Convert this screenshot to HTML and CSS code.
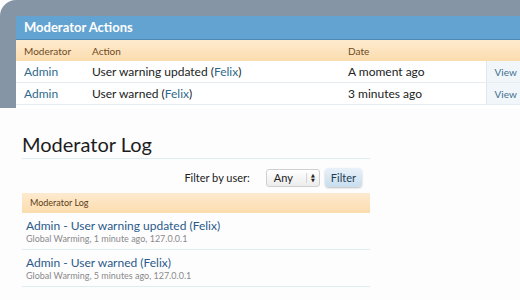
FILE: index.html
```html
<!DOCTYPE html>
<html lang="en">
<head>
  <meta charset="UTF-8">
  <title>Moderator Log</title>
  <link rel="stylesheet" href="styles.css">
</head>
<body>

  <!-- Overlay: moderator actions -->
  <div class="overlay">
    <div class="panel">
      <div class="panel-title">Moderator Actions</div>
      <table class="actions">
        <thead>
          <tr>
            <th class="col-mod">Moderator</th>
            <th class="col-action">Action</th>
            <th class="col-date">Date</th>
            <th class="col-view"></th>
          </tr>
        </thead>
        <tbody>
          <tr>
            <td><a href="#">Admin</a></td>
            <td>User warning updated (<a href="#">Felix</a>)</td>
            <td>A moment ago</td>
            <td class="view"><a href="#">View</a></td>
          </tr>
          <tr>
            <td><a href="#">Admin</a></td>
            <td>User warned (<a href="#">Felix</a>)</td>
            <td>3 minutes ago</td>
            <td class="view"><a href="#">View</a></td>
          </tr>
        </tbody>
      </table>
    </div>
  </div>

  <!-- Page: moderator log -->
  <div class="page">
    <h1 class="title">Moderator Log</h1>

    <form class="filter">
      <label for="user">Filter by user:</label>
      <span class="select">
        <span class="select-value">Any</span>
        <span class="select-arrows">&#9650;<br>&#9660;</span>
      </span>
      <button type="button" class="button">Filter</button>
    </form>

    <div class="section-head">Moderator Log</div>
    <ul class="log">
      <li>
        <a href="#" class="log-title">Admin - User warning updated (Felix)</a>
        <div class="log-meta">Global Warming, 1 minute ago, 127.0.0.1</div>
      </li>
      <li>
        <a href="#" class="log-title">Admin - User warned (Felix)</a>
        <div class="log-meta">Global Warming, 5 minutes ago, 127.0.0.1</div>
      </li>
    </ul>
  </div>

</body>
</html>
```

FILE: styles.css
```css
body {
  margin: 0;
  background: #fdfdfe;
  font-family: Lato, "DejaVu Sans", sans-serif;
  color: #222222;
  overflow: hidden;
}
a {
  color: #2f6a8c;
  text-decoration: none;
}

/* overlay */
.overlay {
  height: 92px;
  padding: 16px 0 0 16px;
  background: #8695a5;
  border-top-left-radius: 16px;
  overflow: hidden;
}
.panel {
  width: 520px;
  background: #ffffff;
  height: 92px;
}
.panel-title {
  height: 23px;
  line-height: 23px;
  padding-left: 8px;
  background: #62a3d2;
  border-bottom: 1px solid #4f8ab3;
  color: #ffffff;
  font-size: 13px;
  font-weight: bold;
}
.actions {
  width: 100%;
  border-collapse: collapse;
  font-size: 12px;
}
.actions th {
  height: 21px;
  padding: 0 0 0 8px;
  text-align: left;
  font-size: 10px;
  font-weight: normal;
  color: #6e4b1f;
  background: linear-gradient(#fdebcf, #fbdcae);
}
.actions td {
  height: 21px;
  padding: 0 0 0 8px;
  border-bottom: 1px solid #e6ecf0;
}
.col-mod { width: 60px; }
.col-action { width: 248px; }
.col-date { width: 138px; }
.actions td.view {
  background: #f0f6fa;
  border-left: 1px solid #dde8ef;
  font-size: 10px;
}
.view a {
  color: #3f6f8f;
}

/* page */
.page {
  width: 348px;
  padding: 0 0 0 22px;
}
.title {
  margin: 0;
  padding: 24px 0 2px;
  line-height: 24px;
  font-size: 20px;
  font-weight: normal;
  color: #1c1c1c;
  border-bottom: 1px solid #dbecf2;
}
.filter {
  display: flex;
  justify-content: flex-end;
  align-items: center;
  gap: 8px;
  padding: 9px 8px 6px 0;
  font-size: 11px;
}
.filter label {
  margin-right: 8px;
}
.select {
  display: flex;
  align-items: center;
  justify-content: space-between;
  width: 41px;
  height: 16px;
  padding: 0 4px 0 7px;
  border: 1px solid #cfcfcf;
  border-radius: 3px;
  background: linear-gradient(#ffffff, #ececec);
  margin-right: -3px;
}
.select-arrows {
  font-size: 5px;
  line-height: 5px;
  color: #222222;
  border-left: 1px solid #d5d5d5;
  padding-left: 4px;
}
.button {
  height: 19px;
  padding: 0 6px;
  border: none;
  border-radius: 4px;
  background: linear-gradient(#e8f1f9, #c8ddee);
  box-shadow: 0 1px 2px rgba(0, 0, 0, 0.25);
  font-family: inherit;
  font-size: 11px;
  color: #1f3d55;
}
.section-head {
  height: 20px;
  line-height: 20px;
  padding-left: 8px;
  background: linear-gradient(#fdeacf, #fbdcae);
  font-size: 9px;
  color: #5b3d17;
}
.log {
  list-style: none;
  margin: 0;
  padding: 0;
}
.log li {
  padding: 5px 0 5px 4px;
  border-bottom: 1px solid #dcecf0;
}
.log-title {
  display: block;
  line-height: 15px;
  font-size: 12px;
  color: #2b5a8a;
}
.log-meta {
  line-height: 11px;
  font-size: 9px;
  color: #8a8a8a;
}
```
